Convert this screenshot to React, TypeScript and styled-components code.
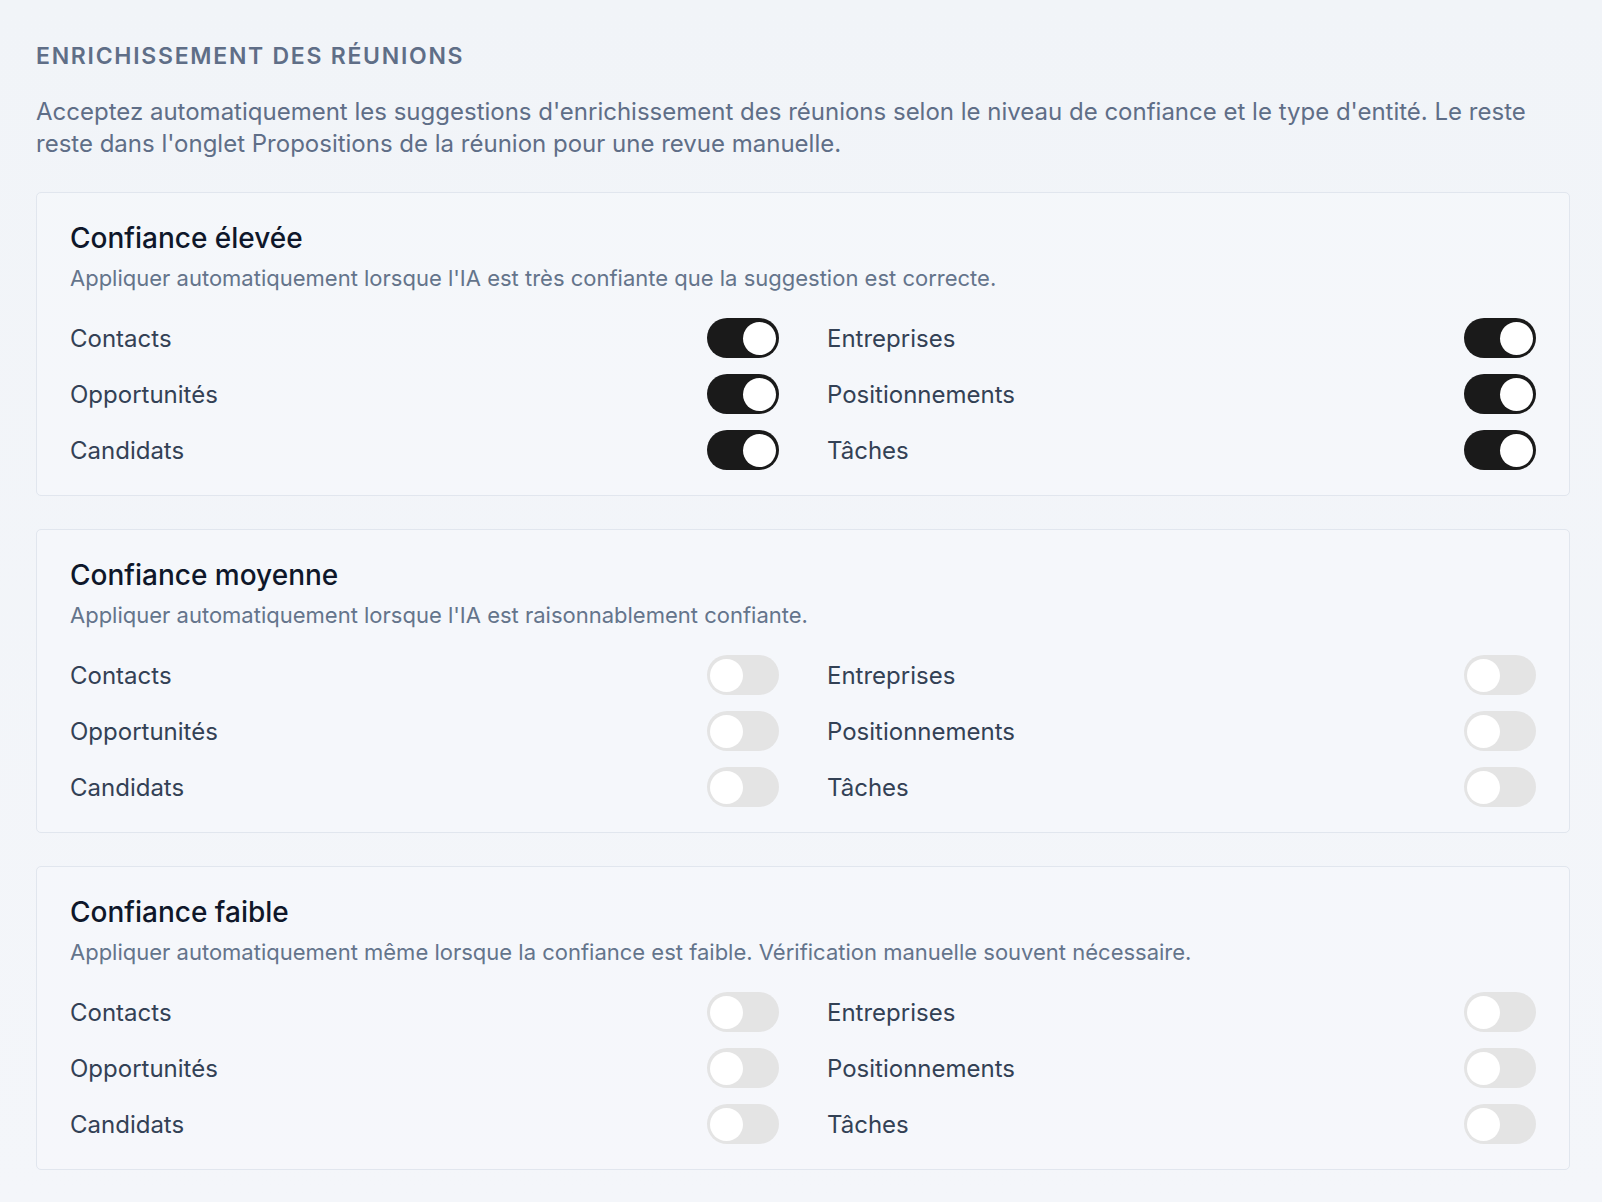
import { createGlobalStyle, styled } from "styled-components";

const GlobalStyle = createGlobalStyle`
  html, body {
    margin: 0;
    padding: 0;
    background: #f3f6fa;
  }
  body {
    font-family: "Inter", "Noto Sans", sans-serif;
    -webkit-font-smoothing: antialiased;
  }
`;

const Page = styled.div`
  min-height: 1202px;
  box-sizing: border-box;
  padding: 41px 32px 0 36px;
  background: linear-gradient(180deg, #f1f4f8 0%, #f4f6fa 100%);
`;

const SectionTitle = styled.h2`
  margin: 0;
  font-size: 23px;
  line-height: 30px;
  font-weight: 600;
  letter-spacing: 0.075em;
  text-transform: uppercase;
  color: #5f6e87;
`;

const Intro = styled.p`
  margin: 25px 0 32px;
  font-size: 24px;
  line-height: 32px;
  color: #5f6e87;
`;

const Cards = styled.div`
  display: flex;
  flex-direction: column;
  gap: 33px;
`;

const Card = styled.section`
  border: 1px solid #e1e6ee;
  border-radius: 5px;
  background: rgba(247, 249, 252, 0.6);
  padding: 25px 33px 25px;
`;

const CardTitle = styled.h3`
  margin: 0;
  font-size: 28px;
  line-height: 40px;
  font-weight: 500;
  color: #0f172a;
`;

const CardText = styled.p`
  margin: 4px 0 24px;
  font-size: 22px;
  line-height: 32px;
  color: #64748b;
`;

const Grid = styled.div`
  display: grid;
  grid-template-columns: 1fr 1fr;
  column-gap: 48px;
  row-gap: 16px;
`;

const Row = styled.label`
  display: flex;
  align-items: center;
  justify-content: space-between;
  height: 40px;
  font-size: 24px;
  color: #334155;
`;

const Track = styled.span<{ $on: boolean }>`
  position: relative;
  display: inline-block;
  width: 72px;
  height: 40px;
  border-radius: 20px;
  background: ${(p) => (p.$on ? "#1a1a1a" : "#e4e4e4")};
  flex-shrink: 0;
`;

const Knob = styled.span<{ $on: boolean }>`
  position: absolute;
  top: 3.5px;
  left: ${(p) => (p.$on ? "36px" : "3px")};
  width: 33px;
  height: 33px;
  border-radius: 50%;
  background: #ffffff;
`;

const entities = [
  "Contacts",
  "Entreprises",
  "Opportunités",
  "Positionnements",
  "Candidats",
  "Tâches",
];

const levels = [
  {
    title: "Confiance élevée",
    text: "Appliquer automatiquement lorsque l'IA est très confiante que la suggestion est correcte.",
    on: true,
  },
  {
    title: "Confiance moyenne",
    text: "Appliquer automatiquement lorsque l'IA est raisonnablement confiante.",
    on: false,
  },
  {
    title: "Confiance faible",
    text: "Appliquer automatiquement même lorsque la confiance est faible. Vérification manuelle souvent nécessaire.",
    on: false,
  },
];

function Toggle({ on }: { on: boolean }) {
  return (
    <Track $on={on} role="switch" aria-checked={on}>
      <Knob $on={on} />
    </Track>
  );
}

export default function App() {
  return (
    <>
      <GlobalStyle />
      <Page>
        <SectionTitle>Enrichissement des réunions</SectionTitle>
        <Intro>
          Acceptez automatiquement les suggestions d'enrichissement des réunions
          selon le niveau de confiance et le type d'entité. Le reste reste dans
          l'onglet Propositions de la réunion pour une revue manuelle.
        </Intro>
        <Cards>
          {levels.map((level) => (
            <Card key={level.title}>
              <CardTitle>{level.title}</CardTitle>
              <CardText>{level.text}</CardText>
              <Grid>
                {entities.map((name) => (
                  <Row key={name}>
                    {name}
                    <Toggle on={level.on} />
                  </Row>
                ))}
              </Grid>
            </Card>
          ))}
        </Cards>
      </Page>
    </>
  );
}
